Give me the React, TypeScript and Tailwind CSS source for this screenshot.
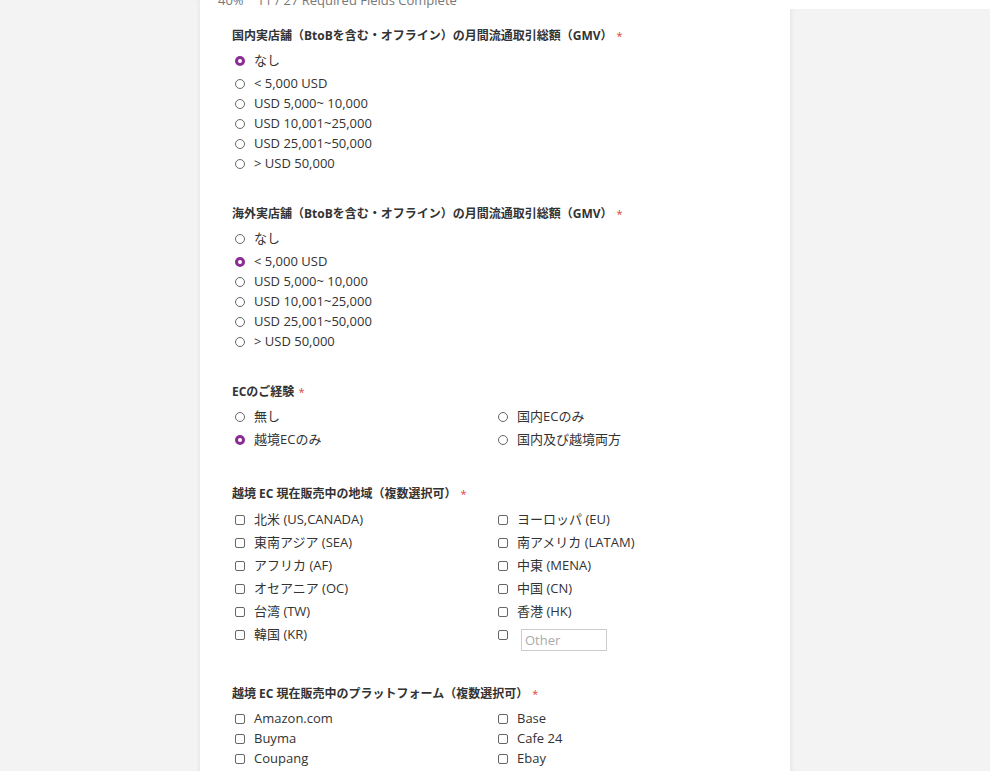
import React from "react"

const font = { fontFamily: '"Open Sans", "Noto Sans CJK JP", sans-serif' }

function Radio({ checked }: { checked?: boolean }) {
  return checked ? (
    <span className="block w-[10px] h-[10px] rounded-full border-[3px] border-[#8a2c93] bg-white shrink-0" />
  ) : (
    <span className="block w-[10px] h-[10px] rounded-full border border-[#666] bg-white shrink-0" />
  )
}

function Check() {
  return <span className="block w-[10px] h-[10px] rounded-[2px] border border-[#666] bg-white shrink-0" />
}

function Option({ label, checked, box, h = "h-[20px]" }: { label: string; checked?: boolean; box?: boolean; h?: string }) {
  return (
    <div className={`flex items-center ${h} pl-[3px]`}>
      {box ? <Check /> : <Radio checked={checked} />}
      <span className="ml-[9px] text-[13px] text-[#333] whitespace-nowrap">{label}</span>
    </div>
  )
}

function Title({ text, className = "" }: { text: string; className?: string }) {
  return (
    <div className={`flex items-center h-[18px] text-[12px] font-bold text-[#333] ${className}`}>
      {text}
      <span className="ml-[4px] text-[#e0443a] text-[11px] font-normal">*</span>
    </div>
  )
}

const gmv = ["なし", "< 5,000 USD", "USD 5,000~ 10,000", "USD 10,001~25,000", "USD 25,001~50,000", "> USD 50,000"]

const regions = [
  ["北米 (US,CANADA)", "ヨーロッパ (EU)"],
  ["東南アジア (SEA)", "南アメリカ (LATAM)"],
  ["アフリカ (AF)", "中東 (MENA)"],
  ["オセアニア (OC)", "中国 (CN)"],
  ["台湾 (TW)", "香港 (HK)"],
]

const platforms = [
  ["Amazon.com", "Base"],
  ["Buyma", "Cafe 24"],
  ["Coupang", "Ebay"],
]

export default function App() {
  return (
    <div className="flex w-full h-[771px] overflow-hidden bg-[#f3f3f3]" style={font}>
      <div className="w-[200px] shrink-0 shadow-[inset_-3px_0_4px_-2px_rgba(0,0,0,0.06)]" />

      <main className="w-[590px] shrink-0 bg-white pl-[32px]">
        <p className="-mt-[9px] -ml-[14px] h-[18px] leading-[18px] text-[13px] text-[#777] whitespace-pre">
          40%    11 / 27 Required Fields Complete
        </p>

        {/* 国内 GMV */}
        <Title className="mt-[18px]" text="国内実店舗（BtoBを含む・オフライン）の月間流通取引総額（GMV）" />
        <div className="mt-[6px]">
          {gmv.map((g, i) => (
            <Option key={g} label={g} checked={i === 0} h={i === 0 ? "h-[23px] pb-[3px]" : "h-[20px]"} />
          ))}
        </div>

        {/* 海外 GMV */}
        <Title className="mt-[31px]" text="海外実店舗（BtoBを含む・オフライン）の月間流通取引総額（GMV）" />
        <div className="mt-[6px]">
          {gmv.map((g, i) => (
            <Option key={g} label={g} checked={i === 1} h={i === 0 ? "h-[23px] pb-[3px]" : "h-[20px]"} />
          ))}
        </div>

        {/* EC経験 */}
        <Title className="mt-[31px]" text="ECのご経験" />
        <div className="mt-[6px] grid grid-cols-[263px_1fr] gap-y-[3px]">
          <Option label="無し" />
          <Option label="国内ECのみ" />
          <Option label="越境ECのみ" checked />
          <Option label="国内及び越境両方" />
        </div>

        {/* 地域 */}
        <Title className="mt-[35px]" text="越境 EC 現在販売中の地域（複数選択可）" />
        <div className="mt-[7px] grid grid-cols-[263px_1fr] gap-y-[3px]">
          {regions.map(([a, b]) => (
            <React.Fragment key={a}>
              <Option label={a} box />
              <Option label={b} box />
            </React.Fragment>
          ))}
          <Option label="韓国 (KR)" box />
          <div className="flex items-start pl-[3px]">
            <div className="h-[20px] flex items-center">
              <Check />
            </div>
            <input
              placeholder="Other"
              className="ml-[13px] mt-[4px] w-[86px] h-[22px] border border-[#ccc] px-[3px] text-[13px] text-[#333] placeholder:text-[#aaa] outline-none"
            />
          </div>
        </div>

        {/* プラットフォーム */}
        <Title className="mt-[34px]" text="越境 EC 現在販売中のプラットフォーム（複数選択可）" />
        <div className="mt-[6px] grid grid-cols-[263px_1fr]">
          {platforms.map(([a, b]) => (
            <React.Fragment key={a}>
              <Option label={a} box />
              <Option label={b} box />
            </React.Fragment>
          ))}
        </div>
      </main>

      <div className="flex-1 flex flex-col">
        <div className="h-[9px] bg-white" />
        <div className="flex-1 shadow-[inset_3px_0_4px_-2px_rgba(0,0,0,0.07)]" />
      </div>
    </div>
  )
}
